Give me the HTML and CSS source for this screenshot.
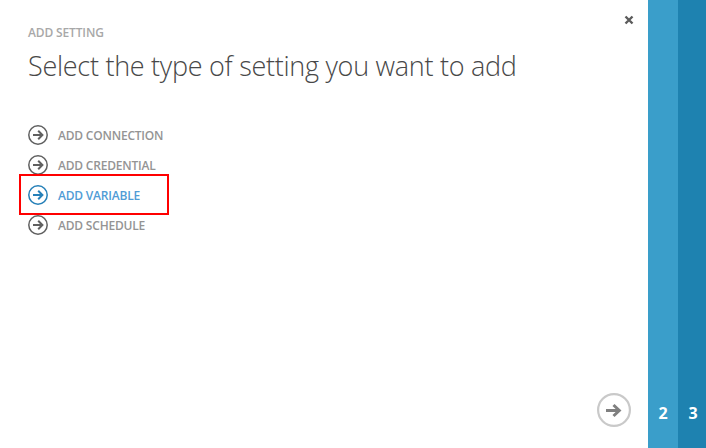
FILE: index.html
```html
<!DOCTYPE html>
<html lang="en">
<head>
<meta charset="utf-8">
<title>Add Setting</title>
<link rel="stylesheet" href="styles.css">
</head>
<body>
<svg width="0" height="0" class="defs" aria-hidden="true">
  <symbol id="arrow" viewBox="0 0 20 20">
    <circle cx="10" cy="10" r="9.2" fill="none" stroke="currentColor" stroke-width="1.5"/>
    <path d="M5 10H14M10.2 5.8L14.4 10L10.2 14.2" fill="none" stroke="currentColor" stroke-width="2"/>
  </symbol>
</svg>
<div class="wizard">
  <main class="panel">
    <header class="top">
      <p class="eyebrow">ADD SETTING</p>
      <button class="close" aria-label="Close"><svg width="10" height="10" viewBox="0 0 10 10"><path d="M1.5 1.5L8.5 8.5M8.5 1.5L1.5 8.5"/></svg></button>
    </header>
    <h1 class="title">Select the type of setting you want to add</h1>
    <ul class="options">
      <li class="option"><svg class="icon"><use href="#arrow"/></svg><span class="label">ADD CONNECTION</span></li>
      <li class="option"><svg class="icon"><use href="#arrow"/></svg><span class="label">ADD CREDENTIAL</span></li>
      <li class="option selected"><svg class="icon"><use href="#arrow"/></svg><span class="label">ADD VARIABLE</span></li>
      <li class="option"><svg class="icon"><use href="#arrow"/></svg><span class="label">ADD SCHEDULE</span></li>
    </ul>
    <button class="next" aria-label="Next"><svg width="34" height="34" viewBox="0 0 34 34"><circle cx="17" cy="17" r="15.9"/><path d="M9 17.5H22"/><path d="M16.5 12L22.3 17.5L16.5 23"/></svg></button>
  </main>
  <div class="step step-two">2</div>
  <div class="step step-three">3</div>
</div>
</body>
</html>
```
FILE: styles.css
```css
*, *::after { box-sizing: border-box; }
body { margin: 0; background: #fff; font-family: "Open Sans", "Noto Sans", sans-serif; }
.defs { position: absolute; }
.wizard { display: flex; height: 448px; overflow: hidden; }
.panel { width: 648px; padding: 0 17px 21px 28px; display: flex; flex-direction: column; }
.top { display: flex; justify-content: space-between; height: 46px; }
.eyebrow { margin: 24px 0 0; font-size: 12px; line-height: 18px; font-weight: 600; letter-spacing: -0.14px; color: #a8a8a8; }
button { border: 0; padding: 0; background: none; display: block; }
.close { width: 10px; height: 10px; margin: 15px -3px 0 0; }
.close svg { display: block; fill: none; stroke: #5c5c5c; stroke-width: 2.4; }
.title { margin: 0; font-size: 27px; line-height: 40px; font-weight: 300; letter-spacing: -0.28px; color: #484848; white-space: nowrap; }
.options { list-style: none; margin: 34px 0 0; padding: 0; }
.option { position: relative; height: 30px; display: flex; align-items: center; gap: 10px; color: #606060; }
.icon { width: 20px; height: 20px; }
.label { padding-top: 2px; font-size: 12px; line-height: 18px; font-weight: 600; letter-spacing: -0.2px; color: #949494; }
.selected { color: #2680b8; }
.selected .label { color: #509cd6; }
.selected::after { content: ""; position: absolute; z-index: 1; left: -9px; top: -6px; width: 150px; height: 41px; border: 2px solid #ff0000; }
.next { width: 34px; height: 34px; margin: auto 0 0 auto; }
.next svg { display: block; fill: none; }
.next circle { stroke: #c9c9c9; stroke-width: 2.2; }
.next path { stroke: #808080; stroke-width: 3; }
.step { display: flex; align-items: flex-end; justify-content: center; padding-bottom: 24px; color: #fff; font-size: 16px; line-height: 22px; font-weight: 700; }
.step-two { width: 30px; background: #3a9eca; }
.step-three { width: 28px; padding-left: 2px; background: #1e82b0; }
```
